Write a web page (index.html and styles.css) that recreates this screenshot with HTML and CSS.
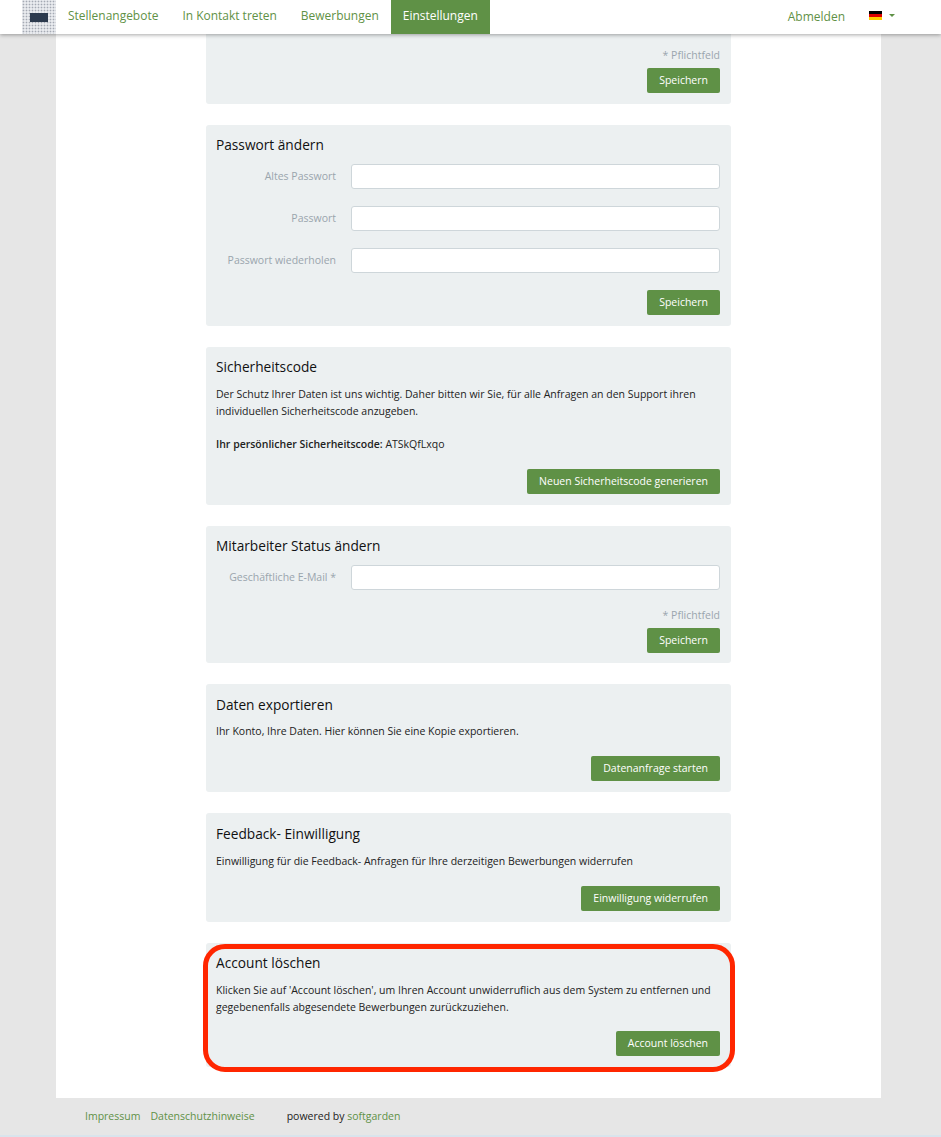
FILE: index.html
```html
<!DOCTYPE html>
<html lang="de">
<head>
    <meta charset="UTF-8">
    <title>Einstellungen</title>
    <link rel="stylesheet" href="styles.css">
</head>
<body>
    <header class="topbar">
        <a href="#" class="logo"><span class="logo-chip"></span></a>
        <nav class="main-nav">
            <a href="#">Stellenangebote</a>
            <a href="#">In Kontakt treten</a>
            <a href="#">Bewerbungen</a>
            <a href="#" class="active">Einstellungen</a>
        </nav>
        <div class="user-nav">
            <a href="#">Abmelden</a>
            <span class="lang">
                <span class="flag"></span>
                <span class="caret"></span>
            </span>
        </div>
    </header>

    <main class="page">
        <section class="card card-cut">
            <div class="required">* Pflichtfeld</div>
            <div class="actions"><button class="btn">Speichern</button></div>
        </section>

        <section class="card">
            <h3>Passwort ändern</h3>
            <div class="field"><label>Altes Passwort</label><input type="password"></div>
            <div class="field"><label>Passwort</label><input type="password"></div>
            <div class="field"><label>Passwort wiederholen</label><input type="password"></div>
            <div class="actions"><button class="btn">Speichern</button></div>
        </section>

        <section class="card">
            <h3>Sicherheitscode</h3>
            <p>Der Schutz Ihrer Daten ist uns wichtig. Daher bitten wir Sie, für alle Anfragen an den Support ihren individuellen Sicherheitscode anzugeben.</p>
            <p class="code-line"><strong>Ihr persönlicher Sicherheitscode:</strong> ATSkQfLxqo</p>
            <div class="actions"><button class="btn">Neuen Sicherheitscode generieren</button></div>
        </section>

        <section class="card card-short">
            <h3>Mitarbeiter Status ändern</h3>
            <div class="field"><label>Geschäftliche E-Mail *</label><input type="email"></div>
            <div class="required">* Pflichtfeld</div>
            <div class="actions"><button class="btn">Speichern</button></div>
        </section>

        <section class="card card-low">
            <h3>Daten exportieren</h3>
            <p>Ihr Konto, Ihre Daten. Hier können Sie eine Kopie exportieren.</p>
            <div class="actions"><button class="btn">Datenanfrage starten</button></div>
        </section>

        <section class="card card-low card-feedback">
            <h3>Feedback- Einwilligung</h3>
            <p>Einwilligung für die Feedback- Anfragen für Ihre derzeitigen Bewerbungen widerrufen</p>
            <div class="actions"><button class="btn">Einwilligung widerrufen</button></div>
        </section>

        <section class="card card-marked">
            <h3>Account löschen</h3>
            <p>Klicken Sie auf 'Account löschen', um Ihren Account unwiderruflich aus dem System zu entfernen und gegebenenfalls abgesendete Bewerbungen zurückzuziehen.</p>
            <div class="actions"><button class="btn">Account löschen</button></div>
        </section>
    </main>

    <footer class="footer">
        <a href="#">Impressum</a>
        <a href="#">Datenschutzhinweise</a>
        <span class="powered">powered by <a href="#">softgarden</a></span>
    </footer>
</body>
</html>
```

FILE: styles.css
```css
/* General Styles */
html, body {
    margin: 0;
    padding: 0;
}

body {
    font-family: 'Open Sans', sans-serif;
    font-size: 10.5px;
    line-height: 17px;
    color: #222;
    background: #e6e6e6;
    height: 1137px;
    overflow: hidden;
    box-sizing: border-box;
    border-bottom: 2px solid #d9e4ec;
}

a {
    color: #5f9146;
    text-decoration: none;
}

strong {
    font-weight: 600;
}

/* Top bar */
.topbar {
    display: flex;
    align-items: stretch;
    height: 34px;
    padding-left: 22px;
    background: #fff;
    box-shadow: 0 1px 4px rgba(0, 0, 0, 0.35);
    position: relative;
    z-index: 2;
}

.logo {
    width: 34px;
    display: flex;
    align-items: center;
    justify-content: center;
    background-color: #e8eaee;
    background-image: radial-gradient(#a4a9b3 40%, transparent 50%);
    background-size: 3px 3px;
}

.logo-chip {
    width: 18px;
    height: 9px;
    background: #2c3a4e;
}

.main-nav {
    display: flex;
}

.main-nav a {
    font-size: 11.98px;
    line-height: 32px;
    padding: 0 12px;
}

.main-nav a.active {
    background: #5f9146;
    color: #fff;
}

.user-nav {
    margin-left: auto;
    display: flex;
    align-items: center;
    font-size: 12px;
    padding-right: 46px;
}

.user-nav a {
    line-height: 32px;
}

.lang {
    display: flex;
    align-items: center;
    margin-left: 24px;
    margin-top: -4px;
}

.flag {
    width: 13px;
    height: 9px;
    background: linear-gradient(#000 0 33%, #d00 33% 66%, #fc0 66%);
}

.caret {
    margin-left: 7px;
    border-top: 3px solid #5f9146;
    border-left: 3px solid transparent;
    border-right: 3px solid transparent;
}

/* Content */
.page {
    width: 825px;
    height: 1064px;
    box-sizing: border-box;
    margin-left: 56px;
    padding: 0 150px;
    background: #fff;
}

.card {
    position: relative;
    background: #ecf0f1;
    border-radius: 3px;
    padding: 10px 11px 11px 10px;
    margin-bottom: 21px;
}

.card-cut {
    border-radius: 0 0 3px 3px;
    padding-top: 13px;
    height: 70px;
    box-sizing: border-box;
}

.card-short {
    padding-bottom: 10px;
}

/* Red highlight around the last card */
.card-marked::after {
    content: '';
    position: absolute;
    top: 1px;
    left: -3px;
    right: -4px;
    bottom: -5px;
    border: 5px solid #ff2600;
    border-radius: 22px;
}

.card h3 {
    font-size: 13.7px;
    font-weight: 400;
    line-height: 19px;
    padding-bottom: 2px;
    margin: 0;
    color: #111;
}

.card-low h3 {
    line-height: 21px;
    padding-bottom: 0;
}

.card p {
    margin: 8px 0 0;
}

.card-feedback p {
    margin-top: 9px;
}

.card p.code-line {
    margin-top: 16px;
}

.field {
    display: grid;
    grid-template-columns: 120px 369px;
    column-gap: 15px;
    align-items: center;
    margin-top: 17px;
}

h3 + .field {
    margin-top: 8px;
}

.field label {
    text-align: right;
    color: #9aa5ad;
}

.field input {
    height: 25px;
    box-sizing: border-box;
    border: 1px solid #ced6da;
    border-radius: 3px;
    background: #fff;
    padding: 0 8px;
    margin: 0;
}

.required {
    text-align: right;
    color: #9aa5ad;
}

.field + .required {
    margin-top: 17px;
}

.actions {
    display: flex;
    justify-content: flex-end;
    margin-top: 17px;
}

p + .actions {
    margin-top: 16px;
}

.card-marked p + .actions {
    margin-top: 15px;
}

.required + .actions {
    margin-top: 4px;
}

.btn {
    font-family: inherit;
    font-size: 10.5px;
    font-weight: 500;
    height: 25px;
    padding: 0 12px 2px;
    color: #fff;
    background: #5f9146;
    border: none;
    border-radius: 2px;
}

/* Footer */
.footer {
    display: flex;
    align-items: center;
    height: 37px;
    padding-left: 85px;
}

.footer a + a {
    margin-left: 10px;
}

.powered {
    margin-left: 32px;
    color: #222;
}
```
